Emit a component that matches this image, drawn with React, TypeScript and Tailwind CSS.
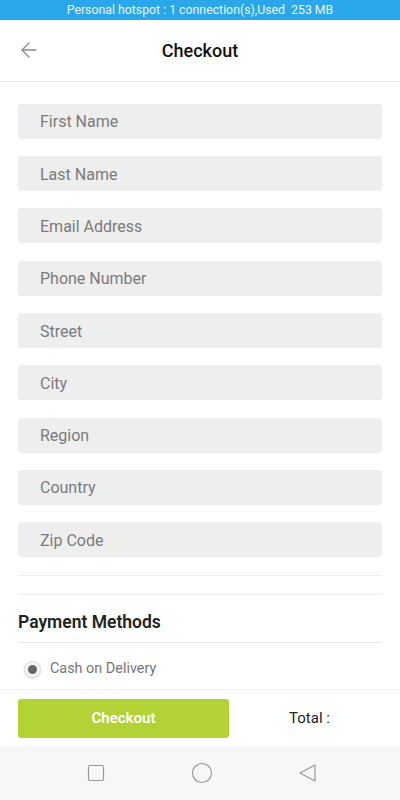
import { ArrowLeft } from "lucide-react"

const fields = [
  "First Name",
  "Last Name",
  "Email Address",
  "Phone Number",
  "Street",
  "City",
  "Region",
  "Country",
  "Zip Code",
]

function App() {
  return (
    <div className="w-[400px] h-[800px] flex flex-col bg-white font-['Roboto',sans-serif] overflow-hidden">
      <div className="h-[20px] bg-[#2aa7ea] flex items-center justify-center text-[12.3px] text-[#e6f5ff] leading-none">
        Personal hotspot : 1 connection(s),Used&nbsp;&nbsp;253 MB
      </div>

      <div className="h-[62px] flex items-center border-b border-[#e8e8e8] relative">
        <ArrowLeft className="absolute left-[17px] w-[24px] h-[24px] text-[#8a8a8a]" strokeWidth={1.3} />
        <h1 className="flex-1 text-center text-[18px] font-medium text-[#111]">Checkout</h1>
      </div>

      <div className="flex-1 px-[18px] pt-[22px]">
        <div className="flex flex-col gap-[17.3px]">
          {fields.map((f) => (
            <div
              key={f}
              className="h-[35px] rounded-[3px] bg-[#eeeeee] flex items-center pl-[22px] pt-[2px] text-[16px] text-[#7b7b7b]"
            >
              {f}
            </div>
          ))}
        </div>
        <div className="mt-[18px] border-t border-[#efefef]" />
        <div className="mt-[18px] border-t border-[#efefef]" />
        <div className="h-[47px] flex items-center pt-[6px] text-[17.5px] font-semibold text-[#222]">
          Payment Methods
        </div>
        <div className="border-t border-[#e6e6e6]" />
        <div className="h-[46px] flex items-center gap-[9px] pl-[6px] pt-[6px]">
          <div className="w-[17px] h-[17px] rounded-full bg-[#f4f4f4] border border-[#dcdcdc] shadow-sm flex items-center justify-center">
            <div className="w-[9px] h-[9px] rounded-full bg-[#666]" />
          </div>
          <span className="text-[14.4px] text-[#777]">Cash on Delivery</span>
        </div>
      </div>

      <div className="h-[57px] border-t border-[#f0f0f0] flex items-center px-[18px]">
        <button className="w-[211px] h-[39px] rounded-[3px] bg-[#b2d235] text-white text-[15px] font-semibold">
          Checkout
        </button>
        <div className="flex-1 text-center text-[15px] font-normal text-[#222] pl-[8px]">Total :</div>
      </div>

      <div className="h-[54px] bg-[#f7f7f7] flex items-center justify-center gap-[84px] pl-[4px]">
        <div className="w-[22px] flex justify-center">
          <svg width="18" height="18" viewBox="0 0 18 18">
            <rect x="1.5" y="1.5" width="15" height="15" rx="1.5" fill="none" stroke="#999" strokeWidth="1.2" />
          </svg>
        </div>
        <div className="w-[22px] flex justify-center">
          <svg width="22" height="22" viewBox="0 0 22 22">
            <circle cx="11" cy="11" r="9.5" fill="none" stroke="#999" strokeWidth="1.2" />
          </svg>
        </div>
        <div className="w-[22px] flex justify-center">
          <svg width="20" height="20" viewBox="0 0 20 20">
            <path d="M17 2 L2 10 L17 18 Z" fill="none" stroke="#999" strokeWidth="1.2" strokeLinejoin="round" />
          </svg>
        </div>
      </div>
    </div>
  )
}

export default App
